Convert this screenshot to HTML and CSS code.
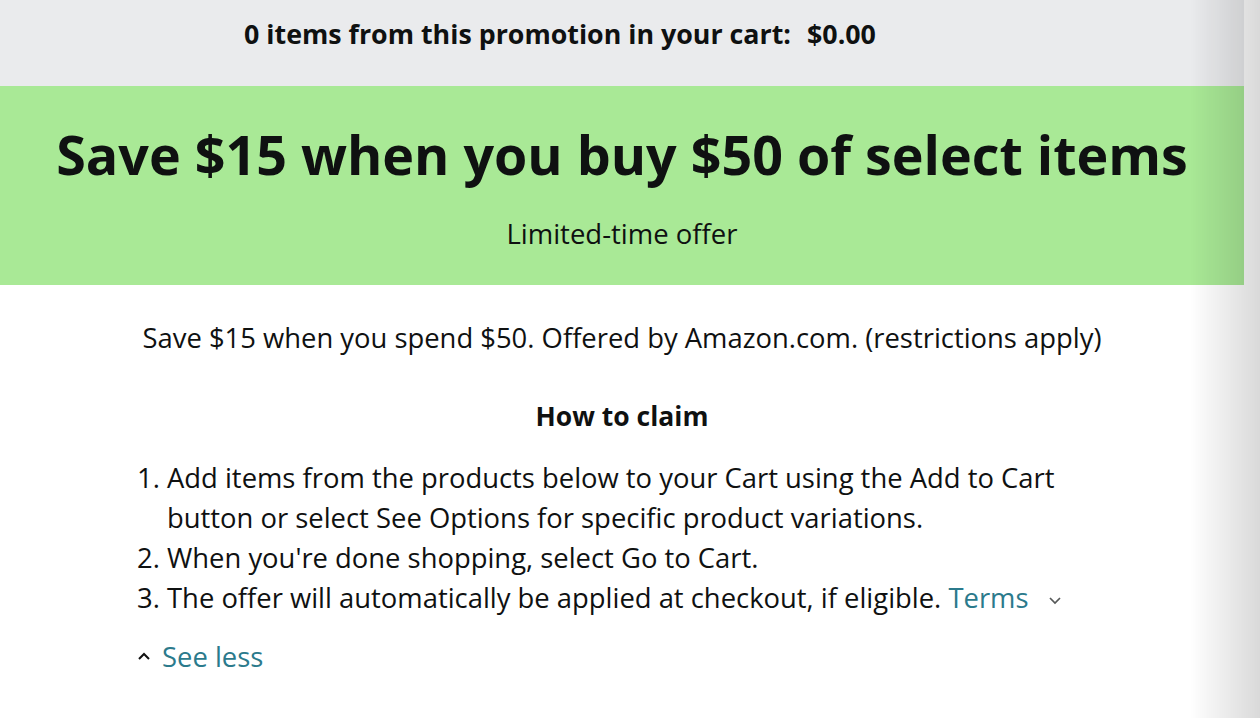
FILE: index.html
```html
<!DOCTYPE html>
<html lang="en">
<head>
	<meta charset="utf-8">
	<title>Promotion</title>
	<link rel="stylesheet" href="styles.css">
</head>
<body>

<div class="cartbar">
    <span class="count">0 items from this promotion in your cart:</span>
    <span class="total">$0.00</span>
</div>

<div class="banner">
    <h1>Save $15 when you buy $50 of select items</h1>
    <div class="sub">Limited-time offer</div>
</div>

<div class="details">
    <p class="summary">Save $15 when you spend $50. Offered by Amazon.com. (restrictions apply)</p>
    <h2>How to claim</h2>
    <div class="steps">
        <ol>
            <li>Add items from the products below to your Cart using the Add to Cart button or select See Options for specific product variations.</li>
            <li>When you're done shopping, select Go to Cart.</li>
            <li>The offer will automatically be applied at checkout, if eligible. <a href="#" class="terms">Terms</a>
                <svg class="chev" width="14" height="9" viewBox="0 0 14 9"><path d="M2 2 L7 7 L12 2" fill="none" stroke="#565959" stroke-width="1.7"/></svg>
            </li>
        </ol>
        <a href="#" class="seeless">
            <svg class="chev-up" width="14" height="9" viewBox="0 0 14 9"><path d="M2 7 L7 2 L12 7" fill="none" stroke="#111" stroke-width="2"/></svg>
            See less
        </a>
    </div>
</div>

<div class="edge"></div>

</body>
</html>
```

FILE: styles.css
```css
body {
    margin: 0;
    font-family: "Open Sans", "Noto Sans", sans-serif;
    color: #0f1111;
    background: #fff;
    width: 1244px;
}
.cartbar {
    height: 86px;
    background: #eaebed;
    display: flex;
    justify-content: center;
    align-items: flex-start;
    padding-right: 124px;
    font-size: 26.8px;
    font-weight: 700;
    box-sizing: border-box;
    padding-top: 15px;
}
.cartbar .total { margin-left: 16px; }
.banner {
    background: #a9e996;
    height: 199px;
    text-align: center;
    padding-top: 34px;
    box-sizing: border-box;
}
.banner h1 {
    margin: 0;
    font-size: 53.8px;
    line-height: 68px;
    font-weight: 700;
}
.banner .sub {
    margin-top: 30px;
    font-size: 27.5px;
    line-height: 32px;
}
.details {
    text-align: center;
    font-size: 27.4px;
}
.details .summary {
    margin: 0;
    padding-top: 36px;
    line-height: 34px;
}
.details h2 {
    margin: 44px 0 0;
    font-size: 26.5px;
    line-height: 34px;
    font-weight: 700;
}
.steps {
    width: 970px;
    margin: 25px auto 0;
    text-align: left;
}
.steps ol {
    margin: 0;
    padding-left: 30px;
    line-height: 40px;
}
.steps a {
    color: #2b7a8c;
    text-decoration: none;
}
.steps .chev { margin-left: 12px; vertical-align: middle; }
.steps .seeless {
    display: inline-flex;
    align-items: center;
    gap: 11px;
    margin-top: 20px;
}
.edge {
    position: fixed;
    top: 0;
    right: 0;
    width: 70px;
    height: 100%;
    background: linear-gradient(to right, rgba(0,0,0,0), rgba(0,0,0,0.15));
}
```
